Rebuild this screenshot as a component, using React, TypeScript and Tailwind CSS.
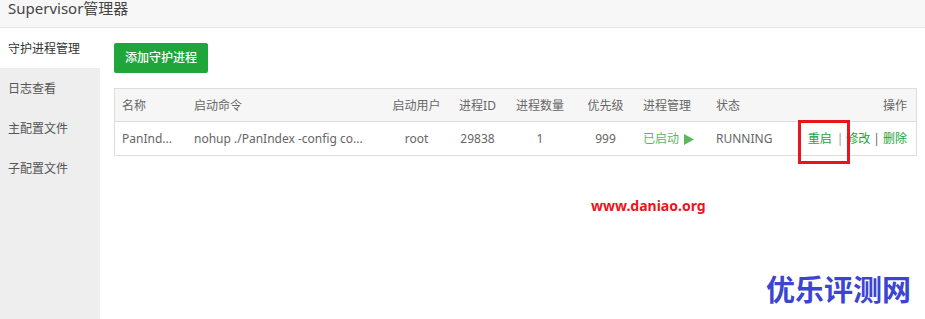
import React from 'react';

const menu = ['守护进程管理', '日志查看', '主配置文件', '子配置文件'];

const cols = 'grid grid-cols-[71px_196px_69px_53px_72px_59px_73px_82px_1fr]';

const App: React.FC = () => {
  return (
    <div
      className="relative w-[925px] h-[319px] overflow-hidden bg-white text-[12px] text-[#666]"
      style={{ fontFamily: '"Noto Sans", "Noto Sans CJK SC", sans-serif' }}
    >
      <div className="h-[28px] bg-[#f7f7f7] border-b border-[#e6e6e6] px-2">
        <div className="text-[15px] leading-[17px] text-[#444]">Supervisor管理器</div>
      </div>

      <div className="flex h-[291px]">
        <div className="w-[100px] bg-[#eeeeee] flex flex-col">
          {menu.map((m, i) => (
            <div
              key={m}
              className={`h-[40px] flex items-center px-2 pt-[1px] ${i === 0 ? 'bg-white text-[#333]' : 'text-[#555]'}`}
            >
              {m}
            </div>
          ))}
        </div>

        <div className="flex-1 pl-[14px] pr-2 pt-[15px]">
          <button className="h-[30px] w-[94px] rounded-[2px] bg-[#20a53a] text-white text-[12px] font-medium">
            添加守护进程
          </button>

          <div className="mt-[15px] w-[803px] border border-[#dddddd]">
            <div className={`${cols} h-[33px] items-center pt-[1px] bg-[#f6f6f6] border-b border-[#dddddd]`}>
              <div className="pl-[7px]">名称</div>
              <div className="pl-2">启动命令</div>
              <div className="text-center">启动用户</div>
              <div className="text-center">进程ID</div>
              <div className="text-center">进程数量</div>
              <div className="text-center">优先级</div>
              <div className="pl-2">进程管理</div>
              <div className="pl-2">状态</div>
              <div className="text-right pr-[9px]">操作</div>
            </div>
            <div className={`${cols} h-[33px] items-center pt-[1px]`}>
              <div className="pl-[7px]">PanInd...</div>
              <div className="pl-2 whitespace-nowrap">nohup ./PanIndex -config co...</div>
              <div className="text-center">root</div>
              <div className="text-center">29838</div>
              <div className="text-center">1</div>
              <div className="text-center">999</div>
              <div className="pl-2 text-[#5cb85c] flex items-center gap-[5px]">
                已启动
                <svg width="10" height="11" viewBox="0 0 10 11">
                  <path d="M0 0 L10 5.5 L0 11 Z" fill="#5cb85c" />
                </svg>
              </div>
              <div className="pl-2">RUNNING</div>
              <div className="text-right pr-[9px] whitespace-nowrap">
                <span className="text-[#20a53a]">重启</span>
                <span className="ml-[5px] mr-[3px] text-[#999]">|</span>
                <span className="text-[#20a53a]">修改</span>
                <span className="mx-[3px] text-[#666]">|</span>
                <span className="text-[#20a53a]">删除</span>
              </div>
            </div>
          </div>
        </div>
      </div>

      <div className="absolute left-[798px] top-[120px] w-[52px] h-[44px] border-[3px] border-[#e8161c]" />

      <div className="absolute left-[591px] top-[197px] text-[14px] font-bold text-[#e8161c] leading-[18px]">
        www.daniao.org
      </div>
      <div className="absolute left-[766px] top-[272px] text-[29px] font-bold text-[#3b45d1] leading-[36px]">
        优乐评测网
      </div>
    </div>
  );
};

export default App;
